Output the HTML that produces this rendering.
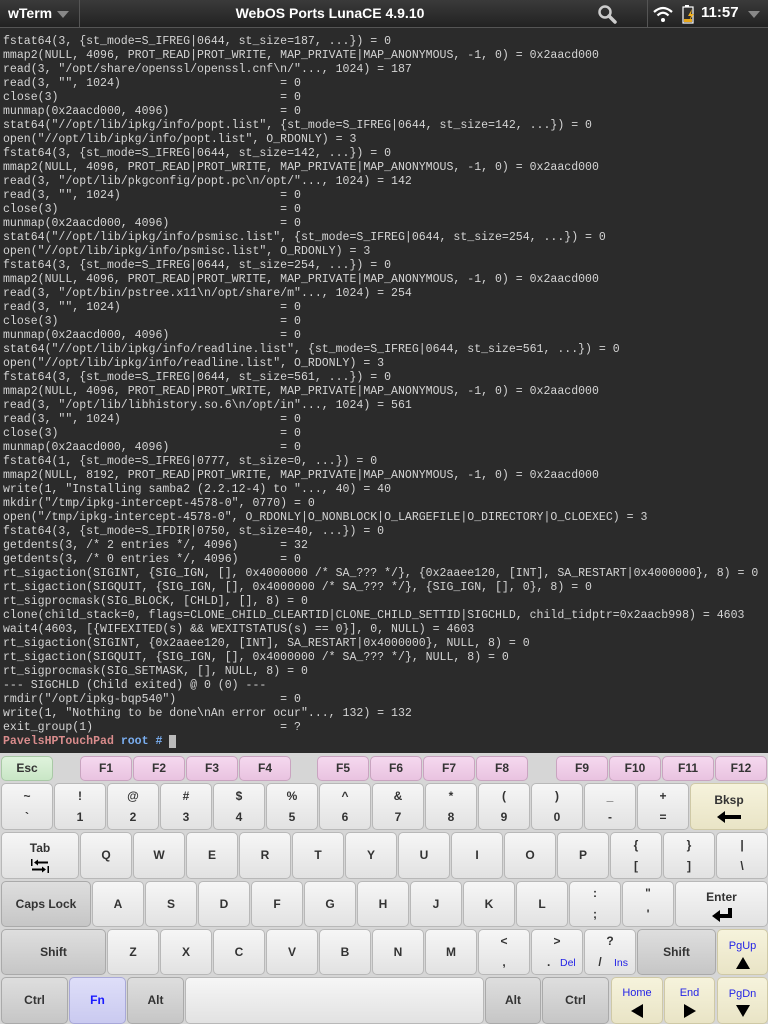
<!DOCTYPE html>
<html><head><meta charset="utf-8">
<style>
*{margin:0;padding:0;box-sizing:border-box}
html,body{width:768px;height:1024px;overflow:hidden;background:#2b2b2b}
#bar{position:absolute;left:0;top:0;width:768px;height:28px;background:linear-gradient(#3a3a3a,#222);border-bottom:1px solid #555;font-family:"Liberation Sans",sans-serif;color:#fff;font-weight:bold;font-size:14px;z-index:2}
#term{position:absolute;left:3px;top:35px;width:765px;font-family:"Liberation Mono",monospace;font-size:11.55px;line-height:14px;color:#d4d4d4;white-space:pre}
#kb{position:absolute;left:0;top:753px;width:768px;height:271px;background:#d6d6d6}
.k{position:absolute;border:1px solid #b8b8b8;border-radius:5px;background:linear-gradient(#f6f6f6,#e2e2e2);font-family:"Liberation Sans",sans-serif;font-size:12px;color:#333;font-weight:bold;text-align:center;display:flex;flex-direction:column;justify-content:center;align-items:center;line-height:21px}
.m{background:linear-gradient(#dedede,#c6c6c6);border-color:#aaa}
.f{background:linear-gradient(#f5d8ef,#e9c3e0);border-color:#c9a4c0}
.e{background:linear-gradient(#dff3dc,#c9e6c6);border-color:#a9c9a6}
.c{background:linear-gradient(#f6f3dc,#e9e4c6);border-color:#cfc9a6}
.fn{background:linear-gradient(#dedef8,#cacaf0);border-color:#a8a8d8;color:#1a1aff}
.b{color:#2424e6;font-weight:normal;font-size:11px}
.sub{position:absolute;font-size:10.5px;color:#2424e6;font-weight:normal}
</style></head><body>
<div id="bar">
<div style="position:absolute;left:8px;top:5px">wTerm</div>
<svg style="position:absolute;left:57px;top:11px" width="12" height="7"><path d="M0 0H12L6 7Z" fill="#888"/></svg>
<div style="position:absolute;left:79px;top:0;width:1px;height:28px;background:#555"></div>
<div style="position:absolute;left:0;width:660px;top:5px;text-align:center">WebOS Ports LunaCE 4.9.10</div>
<svg style="position:absolute;left:597px;top:4px" width="22" height="20"><circle cx="8" cy="8" r="5.5" stroke="#ccc" stroke-width="2.5" fill="none"/><path d="M12 12L18 18" stroke="#ccc" stroke-width="3.5" stroke-linecap="round"/></svg>
<div style="position:absolute;left:647px;top:0;width:1px;height:28px;background:#555"></div>
<svg style="position:absolute;left:652px;top:5px" width="22" height="18"><path d="M2 7Q11 -1 20 7" stroke="#fff" stroke-width="2.2" fill="none"/><path d="M5.5 10.5Q11 5 16.5 10.5" stroke="#fff" stroke-width="2.2" fill="none"/><circle cx="11" cy="15" r="2" fill="#fff"/></svg>
<svg style="position:absolute;left:682px;top:5px" width="14" height="19"><rect x="3" y="0" width="4" height="2" fill="#fff"/><rect x="1" y="2" width="10" height="16" fill="none" stroke="#fff" stroke-width="1.2"/><rect x="2" y="14" width="8" height="3" fill="#e8a617"/><path d="M10 4L6 11H9L7 16L12 9H9Z" fill="#f0b020"/></svg>
<div style="position:absolute;left:701px;top:4px;font-size:15px">11:57</div>
<svg style="position:absolute;left:748px;top:11px" width="12" height="7"><path d="M0 0H12L6 7Z" fill="#888"/></svg>
</div>
<div id="term">fstat64(3, {st_mode=S_IFREG|0644, st_size=187, ...}) = 0
mmap2(NULL, 4096, PROT_READ|PROT_WRITE, MAP_PRIVATE|MAP_ANONYMOUS, -1, 0) = 0x2aacd000
read(3, "/opt/share/openssl/openssl.cnf\n/"..., 1024) = 187
read(3, "", 1024)                       = 0
close(3)                                = 0
munmap(0x2aacd000, 4096)                = 0
stat64("//opt/lib/ipkg/info/popt.list", {st_mode=S_IFREG|0644, st_size=142, ...}) = 0
open("//opt/lib/ipkg/info/popt.list", O_RDONLY) = 3
fstat64(3, {st_mode=S_IFREG|0644, st_size=142, ...}) = 0
mmap2(NULL, 4096, PROT_READ|PROT_WRITE, MAP_PRIVATE|MAP_ANONYMOUS, -1, 0) = 0x2aacd000
read(3, "/opt/lib/pkgconfig/popt.pc\n/opt/"..., 1024) = 142
read(3, "", 1024)                       = 0
close(3)                                = 0
munmap(0x2aacd000, 4096)                = 0
stat64("//opt/lib/ipkg/info/psmisc.list", {st_mode=S_IFREG|0644, st_size=254, ...}) = 0
open("//opt/lib/ipkg/info/psmisc.list", O_RDONLY) = 3
fstat64(3, {st_mode=S_IFREG|0644, st_size=254, ...}) = 0
mmap2(NULL, 4096, PROT_READ|PROT_WRITE, MAP_PRIVATE|MAP_ANONYMOUS, -1, 0) = 0x2aacd000
read(3, "/opt/bin/pstree.x11\n/opt/share/m"..., 1024) = 254
read(3, "", 1024)                       = 0
close(3)                                = 0
munmap(0x2aacd000, 4096)                = 0
stat64("//opt/lib/ipkg/info/readline.list", {st_mode=S_IFREG|0644, st_size=561, ...}) = 0
open("//opt/lib/ipkg/info/readline.list", O_RDONLY) = 3
fstat64(3, {st_mode=S_IFREG|0644, st_size=561, ...}) = 0
mmap2(NULL, 4096, PROT_READ|PROT_WRITE, MAP_PRIVATE|MAP_ANONYMOUS, -1, 0) = 0x2aacd000
read(3, "/opt/lib/libhistory.so.6\n/opt/in"..., 1024) = 561
read(3, "", 1024)                       = 0
close(3)                                = 0
munmap(0x2aacd000, 4096)                = 0
fstat64(1, {st_mode=S_IFREG|0777, st_size=0, ...}) = 0
mmap2(NULL, 8192, PROT_READ|PROT_WRITE, MAP_PRIVATE|MAP_ANONYMOUS, -1, 0) = 0x2aacd000
write(1, "Installing samba2 (2.2.12-4) to "..., 40) = 40
mkdir("/tmp/ipkg-intercept-4578-0", 0770) = 0
open("/tmp/ipkg-intercept-4578-0", O_RDONLY|O_NONBLOCK|O_LARGEFILE|O_DIRECTORY|O_CLOEXEC) = 3
fstat64(3, {st_mode=S_IFDIR|0750, st_size=40, ...}) = 0
getdents(3, /* 2 entries */, 4096)      = 32
getdents(3, /* 0 entries */, 4096)      = 0
rt_sigaction(SIGINT, {SIG_IGN, [], 0x4000000 /* SA_??? */}, {0x2aaee120, [INT], SA_RESTART|0x4000000}, 8) = 0
rt_sigaction(SIGQUIT, {SIG_IGN, [], 0x4000000 /* SA_??? */}, {SIG_IGN, [], 0}, 8) = 0
rt_sigprocmask(SIG_BLOCK, [CHLD], [], 8) = 0
clone(child_stack=0, flags=CLONE_CHILD_CLEARTID|CLONE_CHILD_SETTID|SIGCHLD, child_tidptr=0x2aacb998) = 4603
wait4(4603, [{WIFEXITED(s) &amp;&amp; WEXITSTATUS(s) == 0}], 0, NULL) = 4603
rt_sigaction(SIGINT, {0x2aaee120, [INT], SA_RESTART|0x4000000}, NULL, 8) = 0
rt_sigaction(SIGQUIT, {SIG_IGN, [], 0x4000000 /* SA_??? */}, NULL, 8) = 0
rt_sigprocmask(SIG_SETMASK, [], NULL, 8) = 0
--- SIGCHLD (Child exited) @ 0 (0) ---
rmdir("/opt/ipkg-bqp540")               = 0
write(1, "Nothing to be done\nAn error ocur"..., 132) = 132
exit_group(1)                           = ?
<b style="color:#d98c8c">PavelsHPTouchPad</b> <b style="color:#7aaef0">root #</b> <span style="background:#bbb">&nbsp;</span></div>
<div id="kb"></div>
<script>
var kb=document.getElementById('kb');var T=753;
function K(x1,x2,y1,y2,cls,html){var d=document.createElement('div');d.className='k '+(cls||'');d.style.left=x1+'px';d.style.width=(x2-x1+1)+'px';d.style.top=(y1-T)+'px';d.style.height=(y2-y1+1)+'px';d.innerHTML=html;kb.appendChild(d);}
K(1,52,756,780,'e','Esc');
var fx=[80,133,186,239,317,370,423,476,556,609,662,715];
fx.forEach(function(x,i){K(x,x+51,756,780,'f','F'+(i+1));});
var r1=[['~','`'],['!','1'],['@','2'],['#','3'],['$','4'],['%','5'],['^','6'],['&amp;','7'],['*','8'],['(','9'],[')','0'],['_','-'],['+','=']];
var bk='<svg width="24" height="12"><path d="M0 6L8 0V4H24V8H8V12Z" fill="#000"/></svg>';
r1.forEach(function(p,i){var x=1+i*53;K(x,x+51,783,829,'',p[0]+'<br>'+p[1]);});
K(690,767,783,829,'c','Bksp<br>'+bk);
var tab='<svg width="18" height="14"><path d="M3 3.5L7 0.5V2.5H17V4.5H7V6.5Z M15 10.5L11 7.5V9.5H1V11.5H11V13.5Z" fill="#000"/><rect x="0" y="0" width="1.5" height="7"/><rect x="16.5" y="7" width="1.5" height="7"/></svg>';
K(1,78,832,878,'','Tab<br>'+tab);
'QWERTYUIOP'.split('').forEach(function(c,i){var x=80+i*53;K(x,x+51,832,878,'',c);});
K(610,661,832,878,'','{<br>[');K(663,714,832,878,'','}<br>]');K(716,767,832,878,'','|<br>\\');
K(1,90,881,926,'m','Caps Lock');
'ASDFGHJKL'.split('').forEach(function(c,i){var x=92+i*53;K(x,x+51,881,926,'',c);});
K(569,620,881,926,'',':<br>;');K(622,673,881,926,'','"<br>\'');
var ent='<svg width="20" height="14"><path d="M16 0H20V10H8V14L0 8L8 2V6H16Z" fill="#000"/></svg>';
K(675,767,881,926,'','Enter<br>'+ent);
K(1,105,929,974,'m','Shift');
'ZXCVBNM'.split('').forEach(function(c,i){var x=107+i*53;K(x,x+51,929,974,'',c);});
K(478,529,929,974,'','&lt;<br>,');
K(531,582,929,974,'','&gt;<br>.&nbsp;&nbsp;&nbsp;&nbsp;&nbsp;');
K(584,635,929,974,'','?<br>/&nbsp;&nbsp;&nbsp;&nbsp;&nbsp;&nbsp;');
K(637,715,929,974,'m','Shift');
var up='<svg width="14" height="12"><path d="M7 0L14 12H0Z"/></svg>',dn='<svg width="14" height="12"><path d="M0 0H14L7 12Z"/></svg>',lf='<svg width="12" height="14"><path d="M0 7L12 0V14Z"/></svg>',rt='<svg width="12" height="14"><path d="M12 7L0 0V14Z"/></svg>';
K(717,767,929,974,'c','<span class="b">PgUp</span>'+up);
K(1,67,977,1023,'m','Ctrl');K(69,125,977,1023,'fn','Fn');K(127,183,977,1023,'m','Alt');
K(185,483,977,1023,'','');
K(485,540,977,1023,'m','Alt');K(542,608,977,1023,'m','Ctrl');
K(611,662,977,1023,'c','<span class="b">Home</span>'+lf);
K(664,714,977,1023,'c','<span class="b">End</span>'+rt);
K(717,767,977,1023,'c','<span class="b">PgDn</span>'+dn);
function S(x,y,t){var d=document.createElement('div');d.className='sub';d.style.left=x+'px';d.style.top=(y-T)+'px';d.style.fontFamily='"Liberation Sans",sans-serif';d.textContent=t;kb.appendChild(d);}
S(560,957,'Del');S(614,957,'Ins');
</script>
</body></html>
